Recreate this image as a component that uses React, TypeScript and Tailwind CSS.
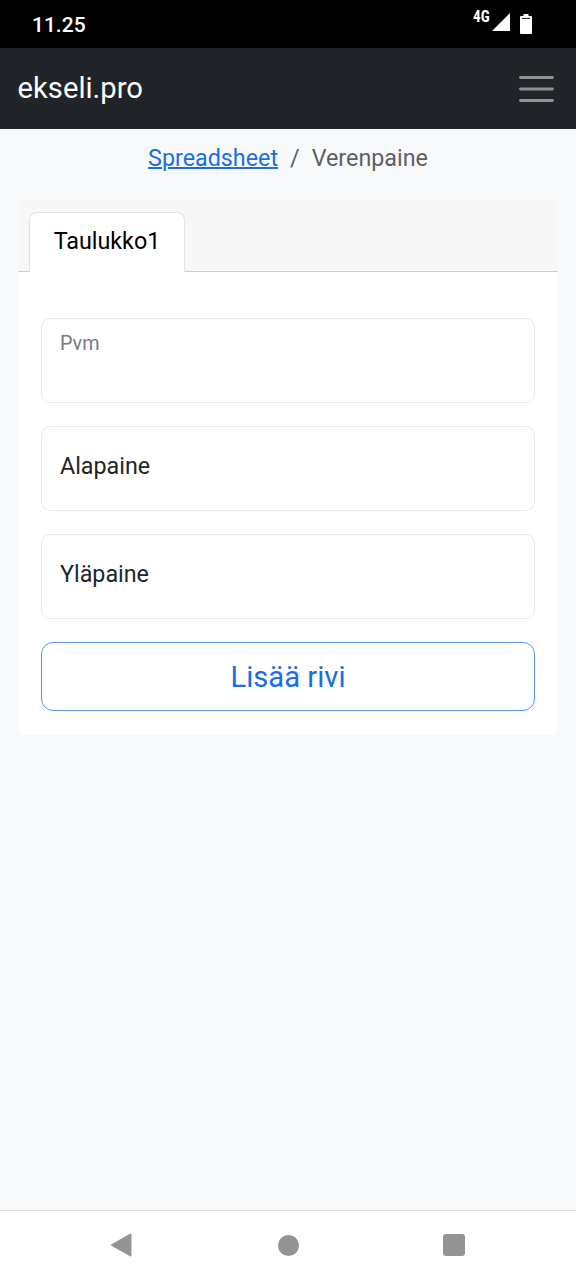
import { useState } from "react";

const FIELDS = [
  { name: "pvm", label: "Pvm", floating: true },
  { name: "alapaine", label: "Alapaine", floating: false },
  { name: "ylapaine", label: "Yläpaine", floating: false },
];

const StatusBar = () => (
  <div className="flex h-12 justify-between bg-black text-white">
    <span className="pt-[9px] pl-8 text-[21px] leading-8 font-medium">
      11.25
    </span>
    <div className="flex items-start pr-[43.6px]">
      <span className="mt-[8px] w-[19px] font-['Roboto_Condensed',Roboto,sans-serif] text-[16px] leading-[18px] font-bold">
        <span className="inline-block origin-left scale-x-[.95]">4G</span>
      </span>
      <svg className="mt-[13px]" width="18" height="18" viewBox="0 0 18 18" fill="currentColor">
        <path d="M18 0v18H0z" />
      </svg>
      <svg className="mt-[14px] ml-[10px]" width="12" height="20" viewBox="0 0 12 20" fill="currentColor">
        <path d="M3.5 0h5v2H11a1 1 0 0 1 1 1v16a1 1 0 0 1-1 1H1a1 1 0 0 1-1-1V3a1 1 0 0 1 1-1h2.5z" />
        <path d="M2 4.4h8" stroke="#000" strokeWidth="0.9" />
      </svg>
    </div>
  </div>
);

const Navbar = () => (
  <nav className="flex h-[81px] items-center justify-between bg-[#212529] pr-[21px] pl-[17.6px]">
    <a className="pb-[2px] text-[29.2px] leading-[44px] text-white" href="#">
      ekseli.pro
    </a>
    <button type="button" aria-label="Menu">
      <svg width="37" height="36" viewBox="0 0 37 36" fill="none">
        <path
          d="M2.5 6.5h32M2.5 18h32M2.5 29.5h32"
          stroke="#909294"
          strokeWidth="2.9"
          strokeLinecap="round"
        />
      </svg>
    </button>
  </nav>
);

const Breadcrumb = () => (
  <ol className="flex h-[35px] justify-center gap-[12px] text-[23.3px] leading-[35px] text-[#5c6065]">
    <li>
      <a
        className="text-[#1a6fe0] underline decoration-[1.5px]"
        href="#"
      >
        Spreadsheet
      </a>
    </li>
    <li>/</li>
    <li>Verenpaine</li>
  </ol>
);

const SystemNav = () => (
  <div className="flex h-[70px] items-center justify-between border-t border-[#dcdddf] bg-white pr-[111px] pb-px pl-[111px] text-[#949494]">
    <svg width="22" height="24" viewBox="0 0 22 24" fill="currentColor">
      <path
        d="M1 12 19.5 1.5v21z"
        stroke="currentColor"
        strokeWidth="2"
        strokeLinejoin="round"
      />
    </svg>
    <span className="size-[21px] rounded-full bg-current" />
    <span className="size-[22px] rounded-[3px] bg-current" />
  </div>
);

const App = () => {
  const [values, setValues] = useState<Record<string, string>>({});

  return (
    <div className="flex h-[1280px] w-[576px] flex-col bg-[#f8f9fb] font-[Roboto,sans-serif]">
      <StatusBar />
      <Navbar />
      <main className="flex-1 px-[18px] pt-[12px]">
        <Breadcrumb />

        <div className="mt-[24px] overflow-hidden rounded-[8px] bg-white">
          <div className="flex h-[72px] items-end border-b border-[#cbcccd] bg-[#f7f7f7] pl-[11px]">
            <button
              type="button"
              className="-mb-px h-[60px] w-[156px] rounded-t-[8px] border border-b-0 border-[#e2e3e4] bg-white pb-[3px] text-[23.3px] leading-[35px] text-black"
            >
              Taulukko1
            </button>
          </div>

          <form
            className="flex flex-col gap-[23px] px-[23px] pt-[46px] pb-[24px]"
            onSubmit={(e) => e.preventDefault()}
          >
            {FIELDS.map(({ name, label, floating }) => (
              <label
                key={name}
                className={`flex h-[85px] w-full flex-col rounded-[9px] border border-[#e9eaeb] px-[18px] ${
                  floating
                    ? "pt-[10px] text-[19.8px] leading-[30px] text-[#7a7c7f]"
                    : "justify-center pb-[5px] text-[23.3px] leading-[35px] text-[#212529]"
                }`}
              >
                {label}
                <input
                  className="h-0 w-full outline-none"
                  value={values[name] ?? ""}
                  onChange={(e) =>
                    setValues({ ...values, [name]: e.target.value })
                  }
                />
              </label>
            ))}
            <button
              type="submit"
              className="h-[69px] w-full rounded-[12px] border border-[#5b93dc] pt-px text-[29.2px] leading-[44px] text-[#1a6fe0]"
            >
              Lisää rivi
            </button>
          </form>
        </div>
      </main>
      <SystemNav />
    </div>
  );
};

export default App;
